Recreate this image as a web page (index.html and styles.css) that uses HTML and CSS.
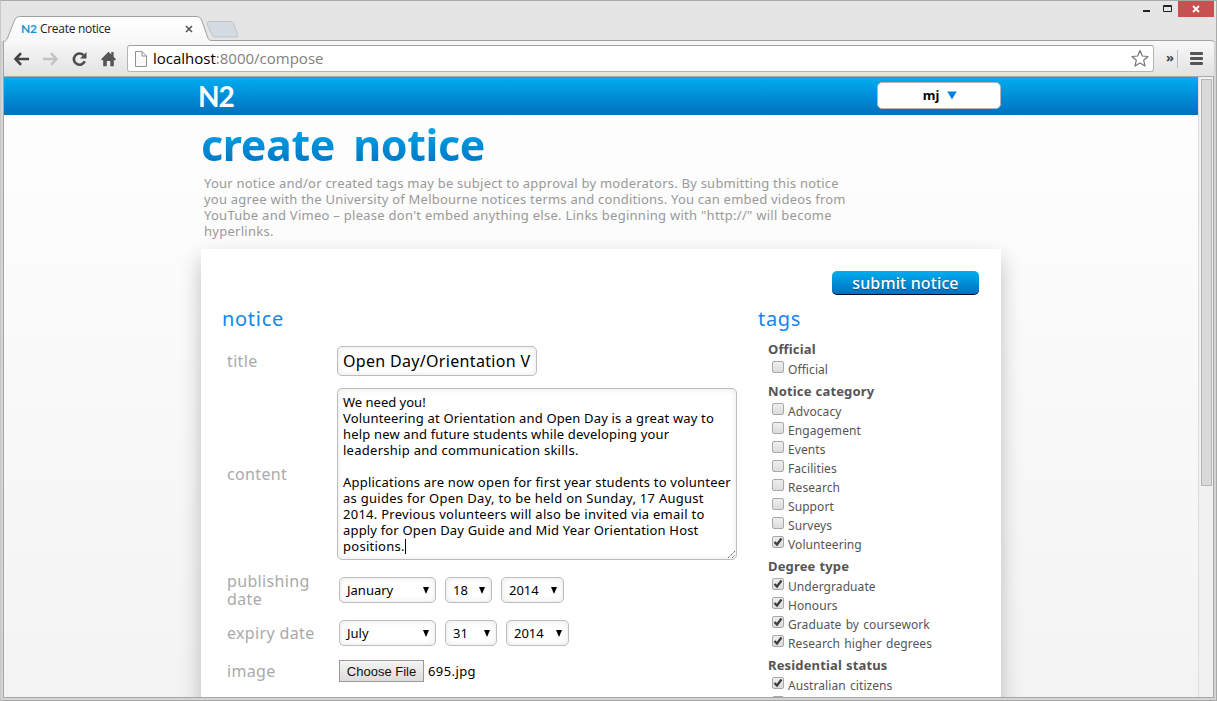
FILE: index.html
```html
<!DOCTYPE html>
<html lang="en">
<head>
<meta charset="utf-8">
<title>Create notice</title>
<link rel="stylesheet" href="styles.css">
</head>
<body>
<div class="window">
  <header class="titlebar">
    <svg class="tab-shape" width="1215" height="41" viewBox="0 0 1215 41">
      <defs><linearGradient id="tabfill" x1="0" y1="0" x2="0" y2="1"><stop offset="0" stop-color="#fff"/><stop offset="1" stop-color="#f8f8f8"/></linearGradient></defs>
      <path d="M206.500 24C205.500 21.500 206.500 20.500 208.500 20.500H229C231 20.500 232 21.200 232.700 23L236.500 33.500C237.300 35.500 236.500 36 235 36H215C212.500 36 211.500 35.300 210.800 33.500Z" fill="#d5dbe2" stroke="#bfc3c7"/>
      <path d="M2.500 41C4 40 5.500 39.500 6.500 37L13 20.500C14.300 17.300 15.500 15.500 18.500 15.500H195C198.500 15.500 200 17 201 20L206.500 36C207.700 39.500 209 39.500 212 39.500H1209Q1213 39.500 1213 41" fill="url(#tabfill)" stroke="#a0a0a0"/>
    </svg>
    <div class="tab">
      <span class="favicon">N2</span>
      <span class="tab-title">Create notice</span>
      <svg class="tab-close" width="8" height="8" viewBox="0 0 8 8"><path d="M1 1L7 7M7 1L1 7" stroke="#555" stroke-width="1.600"/></svg>
    </div>
    <div class="controls">
      <svg width="68" height="16" viewBox="0 0 68 16">
        <path d="M1 10H8" stroke="#222" stroke-width="2"/>
        <path d="M21.500 4.500H29.500V10.500H21.500Z M21 5.500H30" fill="none" stroke="#222"/>
      </svg>
      <span class="close"><svg width="8" height="8" viewBox="0 0 8 8"><path d="M1 1L7 7M7 1L1 7" stroke="#fff" stroke-width="1.800"/></svg></span>
    </div>
  </header>
  <div class="toolbar">
    <svg class="nav" width="110" height="20" viewBox="0 0 110 20">
      <path d="M4 10H17.500M9.500 4.200L4 10L9.500 15.800" transform="translate(-.5 0)" fill="none" stroke="#444" stroke-width="2.600"/>
      <path d="M31 10H44.500M39 4.200L44.500 10L39 15.800" fill="none" stroke="#c2c2c2" stroke-width="2.400"/>
      <path d="M71.500 6.200A5.600 5.600 0 1 0 72.700 12.200" fill="none" stroke="#4c4c4c" stroke-width="2.600"/>
      <path d="M74.500 3V9.500H68Z" fill="#4c4c4c"/>
      <path d="M89 10.200L96.500 2.800L99.300 5.500V3H101.600V7.800L104 10.200L103 11.200H101.800V17.200H98.300V12H94.800V17.200H91.200V11.200H90Z" fill="#555"/>
    </svg>
    <div class="address">
      <svg width="12" height="16" viewBox="0 0 12 16"><path d="M.5 .5H7L11.500 5V15.500H.5Z M7 .5V5H11.500" fill="#fafafa" stroke="#929292"/></svg>
      <span class="url"><b>localhost</b>:8000/compose</span>
      <svg class="star" width="20" height="20" viewBox="0 0 20 20"><path d="M10 1.500L12.300 7L18 7.500L13.700 11.300L15 17L10 14L5 17L6.300 11.300L2 7.500L7.700 7Z" fill="#fff" stroke="#777" stroke-width="1.200" stroke-linejoin="round"/></svg>
    </div>
    <span class="more">»</span>
    <span class="sep"></span>
    <span class="menu"><i></i><i></i><i></i></span>
  </div>
  <div class="viewport">
    <div class="page">
      <div class="topbar">
        <span class="logo">N2</span>
        <button class="user">mj <svg width="10" height="9" viewBox="0 0 10 9"><path d="M.3 .5H9.700L5 8.500Z" fill="#0080e0"/></svg></button>
      </div>
      <main class="main">
        <h1 class="headline">create notice</h1>
        <p class="intro"><span>Your notice and/or created tags may be subject to approval by moderators. By submitting this notice</span><br><span class="t2">you agree with the University of Melbourne notices terms and conditions. You can embed videos from</span><br><span class="t3">YouTube and Vimeo – please don't embed anything else. Links beginning with "http://" will become</span><br><span class="t3">hyperlinks.</span></p>
        <div class="card">
          <div class="actions"><button class="submit">submit notice</button></div>
          <div class="columns">
            <section class="notice">
              <h2 class="section-title">notice</h2>
              <div class="form">
                <label>title</label><div><div class="field title-field">Open Day/Orientation V</div></div>
                <label>content</label><div><div class="field content-field"><span>We need you!</span><br><span class="t1">Volunteering at Orientation and Open Day is a great way to</span><br><span class="t1">help new and future students while developing your</span><br><span class="t3">leadership and communication skills.</span><br><br><span class="t2">Applications are now open for first year students to volunteer</span><br><span class="t3">as guides for Open Day, to be held on Sunday, 17 August</span><br><span class="t3">2014. Previous volunteers will also be invited via email to</span><br><span class="t1">apply for Open Day Guide and Mid Year Orientation Host</span><br><span class="t3">positions.</span><i class="caret"></i><svg class="grip" width="9" height="9" viewBox="0 0 9 9"><path d="M1 8L8 1M5 8L8 5" stroke="#666" stroke-dasharray="1.500 .6"/></svg></div></div>
                <label>publishing<br>date</label><div class="selects"><span class="select month">January<i></i></span><span class="select day">18<i></i></span><span class="select year">2014<i></i></span></div>
                <label>expiry date</label><div class="selects"><span class="select month">July<i></i></span><span class="select day wide">31<i></i></span><span class="select year">2014<i></i></span></div>
                <label>image</label><div class="file"><button class="choose">Choose File</button><span>695.jpg</span></div>
              </div>
            </section>
            <section class="tags">
              <h2 class="section-title">tags</h2>
              <h3>Official</h3>
              <label class="tag"><i class="box"></i>Official</label>
              <h3>Notice category</h3>
              <label class="tag"><i class="box"></i>Advocacy</label>
              <label class="tag"><i class="box"></i>Engagement</label>
              <label class="tag"><i class="box"></i>Events</label>
              <label class="tag"><i class="box"></i>Facilities</label>
              <label class="tag"><i class="box"></i>Research</label>
              <label class="tag"><i class="box"></i>Support</label>
              <label class="tag"><i class="box"></i>Surveys</label>
              <label class="tag"><i class="box"><svg viewBox="0 0 10 10"><path d="M1.500 5L4 7.500L8.500 1.500"/></svg></i>Volunteering</label>
              <h3>Degree type</h3>
              <label class="tag"><i class="box"><svg viewBox="0 0 10 10"><path d="M1.500 5L4 7.500L8.500 1.500"/></svg></i>Undergraduate</label>
              <label class="tag"><i class="box"><svg viewBox="0 0 10 10"><path d="M1.500 5L4 7.500L8.500 1.500"/></svg></i>Honours</label>
              <label class="tag"><i class="box"><svg viewBox="0 0 10 10"><path d="M1.500 5L4 7.500L8.500 1.500"/></svg></i>Graduate by coursework</label>
              <label class="tag"><i class="box"><svg viewBox="0 0 10 10"><path d="M1.500 5L4 7.500L8.500 1.500"/></svg></i>Research higher degrees</label>
              <h3>Residential status</h3>
              <label class="tag"><i class="box"><svg viewBox="0 0 10 10"><path d="M1.500 5L4 7.500L8.500 1.500"/></svg></i>Australian citizens</label>
              <label class="tag"><i class="box"></i></label>
            </section>
          </div>
        </div>
      </main>
    </div>
    <div class="scrollbar"><div class="thumb"></div></div>
  </div>
</div>
</body>
</html>
```
FILE: styles.css
```css
* { box-sizing: border-box; }
body { margin: 0; font-family: "Noto Sans", "Open Sans", sans-serif; overflow: hidden; }
i { font-style: normal; }
button { font-family: inherit; margin: 0; }

.window { width: 1217px; height: 701px; background: #d4d4d4; border: 1px solid #a9a9a9; border-left-color: #c8c8c8; padding: 0 2px 0 2px; display: flex; flex-direction: column; overflow: hidden; }
.titlebar { height: 40px; flex: none; margin: 0 -2px; padding-left: 2px; background: #e5e5e5; position: relative; display: flex; justify-content: space-between; }
.tab-shape { position: absolute; left: 0; top: 0; }
.tab { position: relative; display: flex; align-items: center; width: 192px; height: 24px; margin-top: 16px; padding: 0 2px 2px 18px; }
.tab-close { margin-top: 2px; }
.favicon { font: bold 12px Lato, sans-serif; color: #1a94d4; width: 19px; letter-spacing: -.3px; }
.tab-title { font: 12px "Open Sans", sans-serif; color: #222; letter-spacing: -.3px; flex: 1; }
.controls { position: relative; display: flex; margin-right: 2px; }
.controls > svg { margin-right: -32px; }
.close { width: 36px; height: 16px; background: #c75050; display: flex; align-items: center; justify-content: center; }

.toolbar { height: 36px; flex: none; display: flex; align-items: center; background: linear-gradient(#f8f8f8, #e2e2e2); border-bottom: 1px solid #aaa; border-left: 1px solid #a6a6a6; }
.nav { width: 110px; margin: 0 12px 0 8px; flex: none; }
.address { width: 1027px; height: 27px; margin-left: -7px; display: flex; align-items: center; padding: 0 3px 0 7px; background: #fff; border: 1px solid #b4b4b4; border-top-color: #a0a0a0; border-radius: 3px; }
.url { flex: 1; margin-left: 6px; padding-bottom: 2px; font: 15px "Open Sans", sans-serif; color: #808080; letter-spacing: 0; }
.url b { font-weight: 400; color: #000; }
.more { font: bold 13px "Open Sans", sans-serif; color: #444; width: 11px; margin-left: 12px; padding-bottom: 3px; }
.sep { width: 1px; height: 18px; background: #bbb; margin-right: 12px; }
.menu { display: grid; gap: 2px; }
.menu i { width: 13px; height: 3px; border-radius: 1px; background: #555; }

.viewport { flex: 1; min-height: 0; margin-bottom: 2px; display: flex; border: 1px solid #a6a6a6; border-width: 0 1px 1px; }
.page { width: 1194px; flex: none; overflow: hidden; background: linear-gradient(#fefefe 6%, #f3f3f3); }
.scrollbar { flex: 1; background: #f1f1f1; border-left: 1px solid #dcdcdc; padding: 2px 1px 0 2px; }
.thumb { height: 407px; background: #d9d9d9; border: 1px solid #b5b5b5; }
.topbar { height: 38px; background: linear-gradient(#00aeef, #006fbf); display: flex; align-items: center; justify-content: space-between; padding: 0 197px 0 194px; }
.logo { font: bold 28px Lato, sans-serif; color: #fff; letter-spacing: -1px; }
.user { width: 124px; height: 27px; margin-bottom: 2px; background: #fff; border: 1px solid #b4b4b4; border-radius: 5px; font-weight: 700; font-size: 13px; color: #000; padding: 0 0 0 2px; display: flex; gap: 8px; justify-content: center; align-items: center; }

.main { width: 800px; margin-left: 197px; }
.headline { margin: 0; height: 60px; font-size: 43px; line-height: 60px; letter-spacing: -.4px; word-spacing: 7.5px; white-space: nowrap; width: 320px; background: linear-gradient(#00aeef 10%, #006fbf 90%); -webkit-background-clip: text; background-clip: text; color: transparent; }
.intro { margin: 0 0 11px 3px; height: 63px; font-size: 13px; line-height: 16px; color: #999; white-space: nowrap; letter-spacing: .23px; }
.t1 { letter-spacing: .17px; }
.t2 { letter-spacing: .21px; }
.t3 { letter-spacing: .27px; }
.card { height: 600px; background: #fff; box-shadow: 0 10px 20px rgba(0,0,0,.24); padding: 22px 22px 0 21px; }
.actions { display: flex; justify-content: flex-end; }
.submit { width: 147px; height: 24px; border: 0; border-bottom: 1px solid #001020; border-radius: 5px; background: linear-gradient(#00aeef, #006fbf); color: #fff; font-size: 16px; line-height: 22px; font-weight: 500; padding: 0; letter-spacing: .12px; text-shadow: 0 1px 1px rgba(0,0,0,.4); }
.columns { display: grid; grid-template-columns: 536px 1fr; margin-top: 9px; }
.section-title { margin: 0; height: 30px; font-weight: 400; font-size: 20px; line-height: 30px; color: #1486ea; letter-spacing: .7px; }
.form { display: grid; grid-template-columns: 110px 1fr; grid-template-rows: 42px 184px 48px 38px 38px; align-items: center; padding: 6px 0 0 5px; }
.form > label { font-size: 16px; line-height: 18px; color: #aaa; letter-spacing: .35px; }
.field { border: 1px solid #bdbdbd; border-radius: 5px; background: #fff; box-shadow: inset 0 0 6px rgba(0,0,0,.1); white-space: nowrap; color: #000; }
.title-field { width: 200px; height: 30px; font-size: 16px; line-height: 28px; padding-left: 5px; letter-spacing: .32px; overflow: hidden; }
.content-field { position: relative; width: 400px; height: 172px; padding: 5px; font-size: 13px; line-height: 16px; }
.caret { display: inline-block; width: 1px; height: 15px; background: #000; vertical-align: -3px; }
.grip { position: absolute; right: 0; bottom: 0; }
.selects { display: flex; gap: 9px; padding-left: 2px; }
.select { height: 26px; border: 1px solid #bdbdbd; border-radius: 5px; box-shadow: inset 0 0 6px rgba(0,0,0,.1); display: flex; align-items: center; justify-content: space-between; padding: 0 6px 0 7px; font-size: 13px; color: #000; }
.select i { border: 3px solid transparent; border-width: 7px 3px 0; border-top-color: #000; }
.month { width: 97px; }
.day { width: 47px; }
.wide { width: 52px; }
.year { width: 63px; }
.file { display: flex; align-items: center; gap: 4px; padding-left: 2px; font-size: 13px; letter-spacing: .4px; }
.choose { width: 85px; height: 22px; padding: 0; border: 1px solid #999; background: linear-gradient(#f4f4f4, #dcdcdc); font: 13px "Liberation Sans", sans-serif; color: #111; letter-spacing: 0; }

.tags h3 { margin: 2px 0 0 10px; height: 21px; line-height: 21px; font-size: 13px; color: #555; letter-spacing: .15px; word-spacing: .5px; }
.tags .section-title + h3 { margin-top: 5px; }
.tag { display: flex; align-items: center; height: 19px; margin-left: 14px; gap: 4px; font-size: 12px; line-height: 19px; color: #555; letter-spacing: .08px; word-spacing: 1px; }
.box { width: 12px; height: 12px; margin-bottom: 6px; border: 1px solid #a9a9a9; border-radius: 2px; background: linear-gradient(#eee, #dcdcdc); display: flex; }
.box svg { width: 10px; height: 10px; }
.box path { fill: none; stroke: #3c3c3c; stroke-width: 2.2; }
```
